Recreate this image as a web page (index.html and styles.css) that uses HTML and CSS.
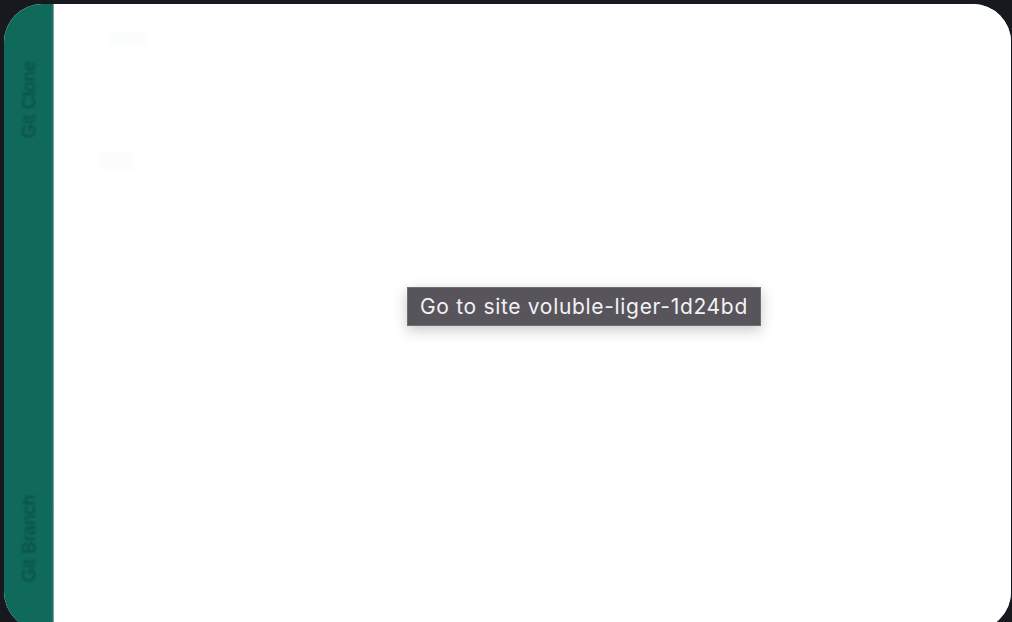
FILE: index.html
```html
<!DOCTYPE html>
<html>
<head>
<meta charset="utf-8">
<link rel="stylesheet" href="styles.css">
</head>
<body>
<div class="card">
  <aside class="rail">
    <span class="rail-label">Git Clone</span>
    <span class="rail-label">Git Branch</span>
  </aside>
  <div class="rail-edge"></div>
  <main class="content">
    <div class="ghost ghost-1"></div>
    <div class="ghost ghost-2"></div>
  </main>
  <div class="tooltip">Go to site voluble-liger-1d24bd</div>
</div>
</body>
</html>
```
FILE: styles.css
```css
html, body {
  margin: 0;
  height: 100%;
}
body {
  background: #16191d;
  padding: 4px 0 0 4px;
  box-sizing: border-box;
  overflow: hidden;
  font-family: "Liberation Sans", Arial, sans-serif;
}
.card {
  position: relative;
  width: 1007px;
  height: 626px;
  border-radius: 38px;
  overflow: hidden;
  background: #ffffff;
  display: flex;
}
.rail {
  width: 47px;
  background: #106a5b;
  display: flex;
  flex-direction: column;
  justify-content: space-between;
  align-items: center;
  padding: 57px 0 48px 2px;
  box-sizing: border-box;
}
.rail-label {
  writing-mode: vertical-rl;
  transform: rotate(180deg);
  font-size: 18.5px;
  color: #0a4940;
  filter: blur(0.8px);
}
.rail-edge {
  width: 3px;
  background: linear-gradient(90deg, #0f6456, #2f6f66 60%, #9fc9c4);
}
.content {
  flex: 1;
  background: #ffffff;
  position: relative;
}
.ghost {
  position: absolute;
  background: #fbfcfc;
  filter: blur(2px);
}
.ghost-1 { left: 56px; top: 28px; width: 36px; height: 14px; }
.ghost-2 { left: 46px; top: 148px; width: 34px; height: 18px; }
.tooltip {
  position: absolute;
  left: 403px;
  top: 283px;
  height: 39px;
  box-sizing: border-box;
  padding: 0 12px;
  display: flex;
  align-items: center;
  background: #57555b;
  border: 1px solid #6f6e73;
  color: #f2f2f3;
  font-family: Inter, "Liberation Sans", sans-serif;
  font-size: 21px;
  letter-spacing: 0.68px;
  box-shadow: 0 4px 14px rgba(0, 0, 0, 0.22);
}
```
